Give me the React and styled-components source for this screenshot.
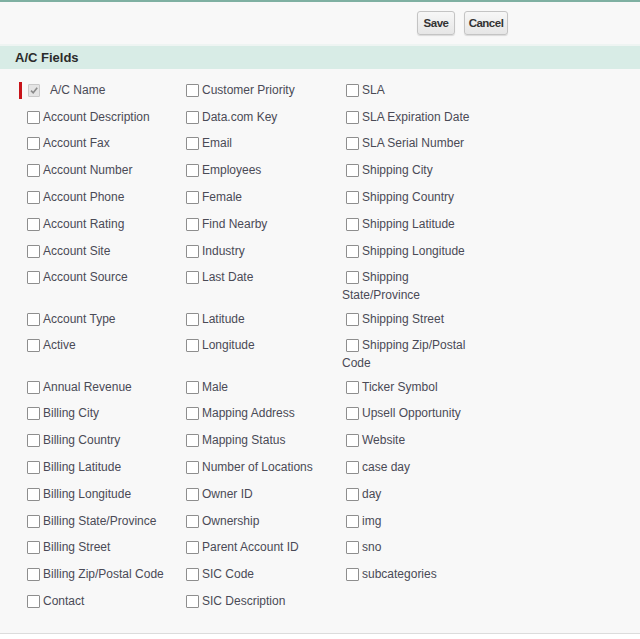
import React from "react";
import styled, { createGlobalStyle } from "styled-components";

const GlobalStyle = createGlobalStyle`
  html, body {
    margin: 0;
    padding: 0;
    background: #ffffff;
  }
  body {
    font-family: Arial, "Liberation Sans", sans-serif;
  }
`;

const Panel = styled.div`
  background: #f8f8f8;
  border-top: 2px solid #7fb0a2;
  border-bottom: 1px solid #dcdcdc;
  height: 631px;
  box-sizing: content-box;
`;

const ButtonBar = styled.div`
  display: flex;
  justify-content: flex-end;
  gap: 9px;
  padding: 9px 132px 9px 0;
  border-bottom: 2px solid #eef4f2;
`;

const Button = styled.button`
  width: ${({ w }) => w}px;
  height: 24px;
  padding: 0;
  border: 1px solid #c4c4c4;
  border-radius: 3px;
  background: linear-gradient(#f7f7f7, #e6e6e6);
  box-shadow: 0 1px 1px rgba(0, 0, 0, 0.12);
  color: #333333;
  font-family: "Liberation Sans", Arial, sans-serif;
  font-size: 11.5px;
  font-weight: bold;
  letter-spacing: -0.5px;
  cursor: pointer;
`;

const SectionHeader = styled.h3`
  margin: 0;
  height: 23px;
  line-height: 23px;
  padding-left: 15px;
  background: #d8ece6;
  color: #2b2b2b;
  font-family: "Liberation Sans", Arial, sans-serif;
  font-size: 13px;
  font-weight: bold;
`;

const FieldGrid = styled.div`
  display: grid;
  grid-template-columns: 159px 160px 140px;
  padding: 9.3px 0 0 23px;
`;

const Cell = styled.label`
  position: relative;
  display: block;
  padding: 4.55px 0;
  font-family: "Liberation Sans", Arial, sans-serif;
  font-size: 12px;
  line-height: 14.5px;
  color: #4a4a56;

  ${({ required }) =>
    required &&
    `
    &::before {
      content: "";
      position: absolute;
      left: -4px;
      top: 4px;
      width: 3px;
      height: 17px;
      background: #c8141a;
    }
  `}
`;

const Box = styled.span`
  display: inline-block;
  box-sizing: border-box;
  overflow: hidden;
  width: ${({ checked }) => (checked ? "12px" : "13px")};
  height: 13px;
  margin: 0 ${({ checked }) => (checked ? "10px" : "3px")} 3.7px
    ${({ checked }) => (checked ? "5px" : "4px")};
  vertical-align: -6.7px;
  border: 1px solid ${({ checked }) => (checked ? "#c9c9c9" : "#8e8e8e")};
  border-radius: 1px;
  background: ${({ checked }) => (checked ? "#e4e4e4" : "#ffffff")};

  svg {
    display: block;
  }
`;

const col1 = [
  "A/C Name",
  "Account Description",
  "Account Fax",
  "Account Number",
  "Account Phone",
  "Account Rating",
  "Account Site",
  "Account Source",
  "Account Type",
  "Active",
  "Annual Revenue",
  "Billing City",
  "Billing Country",
  "Billing Latitude",
  "Billing Longitude",
  "Billing State/Province",
  "Billing Street",
  "Billing Zip/Postal Code",
  "Contact",
];

const col2 = [
  "Customer Priority",
  "Data.com Key",
  "Email",
  "Employees",
  "Female",
  "Find Nearby",
  "Industry",
  "Last Date",
  "Latitude",
  "Longitude",
  "Male",
  "Mapping Address",
  "Mapping Status",
  "Number of Locations",
  "Owner ID",
  "Ownership",
  "Parent Account ID",
  "SIC Code",
  "SIC Description",
];

const col3 = [
  "SLA",
  "SLA Expiration Date",
  "SLA Serial Number",
  "Shipping City",
  "Shipping Country",
  "Shipping Latitude",
  "Shipping Longitude",
  "Shipping State/Province",
  "Shipping Street",
  "Shipping Zip/Postal Code",
  "Ticker Symbol",
  "Upsell Opportunity",
  "Website",
  "case day",
  "day",
  "img",
  "sno",
  "subcategories",
];

const Field = ({ name, required }) => (
  <Cell required={required}>
    <Box checked={required}>
      {required && (
        <svg width="10" height="11" viewBox="0 0 10 11">
          <path
            d="M2 5.6 L4.2 7.8 L8.2 2.8"
            fill="none"
            stroke="#8a8a8a"
            strokeWidth="1.6"
          />
        </svg>
      )}
    </Box>
    {name}
  </Cell>
);

export default function App() {
  const rows = col1.map((_, i) => [col1[i], col2[i], col3[i]]);
  return (
    <>
      <GlobalStyle />
      <Panel>
        <ButtonBar>
          <Button w={38}>Save</Button>
          <Button w={44}>Cancel</Button>
        </ButtonBar>
        <SectionHeader>A/C Fields</SectionHeader>
        <FieldGrid>
          {rows.map((row, i) =>
            row.map((name, j) =>
              name ? (
                <Field key={`${i}-${j}`} name={name} required={i === 0 && j === 0} />
              ) : (
                <span key={`${i}-${j}`} />
              )
            )
          )}
        </FieldGrid>
      </Panel>
    </>
  );
}
